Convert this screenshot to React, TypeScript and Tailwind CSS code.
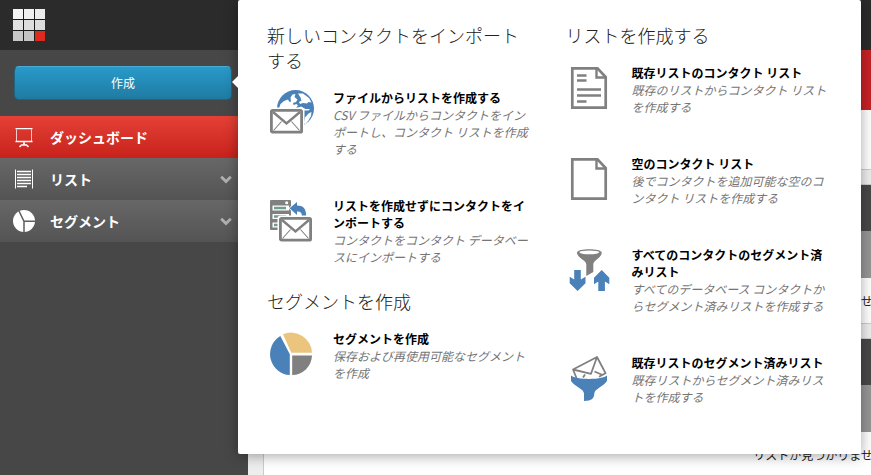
import type { ReactNode } from "react";

const GREY = "#808080";
const BLUE = "#4b81b9";

function Envelope({ x, y }: { x: number; y: number }) {
  return (
    <g transform={`translate(${x} ${y})`}>
      <rect x="-1.5" y="-1.5" width="36" height="27.5" rx="3" fill="#fff" />
      <rect x="1.4" y="1.4" width="30.2" height="21.7" rx="1.2" fill="#fff" stroke={GREY} strokeWidth="2.8" />
      <path d="M3 3 16.5 14.5 30 3" fill="none" stroke={GREY} strokeWidth="2.4" />
      <path d="M3.5 21.5 11.5 12.5M29.5 21.5 21.5 12.5" fill="none" stroke={GREY} strokeWidth="1.1" />
    </g>
  );
}

function Icon({ children }: { children: ReactNode }) {
  return (
    <svg viewBox="0 0 48 48" className="h-12 w-12" aria-hidden="true">
      {children}
    </svg>
  );
}

function GlobeMailIcon() {
  return (
    <Icon>
      <circle cx="28.5" cy="19.5" r="18.5" fill={BLUE} />
      <path
        d="M12 19.5 13.500 15 17 12l4-1.500 1.500 2.500 1.500-.5-.5-4 2-3 3-.5-1 3 3 2.500-1.500 2.500-3 1 .5 2 3-1 1.500 1.500-3 3.500-1.500 5-9 3z"
        fill="#fff"
      />
      <path d="M31 4.500 36 4.500 42 9l2.500 4.500-3-.5-1.500 1.500-4-.5-3 1-1-2 2.500-1.500-1-3z" fill="#fff" />
      <path d="M30.500 19 34 17.500l4.500 2.500 4.500 0-1.500 1.500-4 0-4-1-2.500 1.500z" fill="#fff" />
      <path d="M37 33.500l1-5 3.500-4 3-1.500-.5 4-2.500 4.500-3.500 4z" fill="#fff" />
      <Envelope x={3} y={20} />
    </Icon>
  );
}

function ListMailIcon() {
  return (
    <Icon>
      <rect x="3" y="3" width="21" height="30" rx="1" fill={GREY} />
      <circle cx="19.7" cy="5.8" r="1.5" fill="#fff" />
      <path d="M5.5 8.600h16.500v5H5.500zM5.500 17h16.500v5H5.500zM5.500 25.600h9v5h-9z" fill="#fff" />
      <path d="M7 11h12M7 19.500h12M7 28h5" stroke="#6d9f8c" strokeWidth="2.600" />
      <path d="M21.500 11.300 30.500 3v4.400c6 .2 10.200 3.400 10.200 12.600h-8c0-3.600.2-4.300-2.200-4.500v4.400z" fill="#fff" />
      <path d="M22.600 11.300 30 5v3.400c5.800 0 9.200 2.700 9.200 10.600h-4.400c0-3.800-1.400-4.600-4.800-4.600v3.600z" fill={BLUE} />
      <Envelope x={12} y={20} />
    </Icon>
  );
}

function PieIcon() {
  return (
    <Icon>
      <path d="M22.800 24.200V45A21 21 0 0 1 13.300 6z" fill={BLUE} />
      <path d="M24.300 22.700 16 4.200A21 21 0 0 1 45 22.700z" fill="#ebc47e" />
      <path d="M25.200 25.500H45A20 20 0 0 1 25.200 45z" fill={GREY} />
    </Icon>
  );
}

function PageIcon({ lines = false }: { lines?: boolean }) {
  return (
    <Icon>
      <path d="M6.300 4.300H31.500L39.700 13V43.700H6.300z" fill="#fff" stroke={GREY} strokeWidth="2.700" />
      <path d="M30.500 4V13.500H40" fill="none" stroke={GREY} strokeWidth="2.400" />
      {lines && (
        <path
          d="M11 11.500h9.500M11 16.500h9.500M11 25.500h24M11 31.500h24M11 37.500h9.500"
          stroke={GREY}
          strokeWidth="2.600"
        />
      )}
    </Icon>
  );
}

function FunnelArrowsIcon() {
  return (
    <Icon>
      <path d="M11 6.500C11 2 35.700 2 35.700 6.500 35.700 12 27.300 14 27.300 18.500V26L20.300 30V18.500C20.300 14 11 12 11 6.500z" fill={GREY} />
      <ellipse cx="23.300" cy="6.300" rx="10" ry="1.900" fill="#fff" />
      <path d="M8.200 24h6.600v9.600l4.700-2.800v6.400L11.600 45l-7.900-7.800v-6.400l4.500 2.800z" fill={BLUE} />
      <path d="M32.300 45h6.600v-9.600l4.400 2.800v-6.400L35.700 24 28 31.800v6.400l4.300-2.800z" fill={BLUE} />
    </Icon>
  );
}

function FunnelMailIcon() {
  return (
    <Icon>
      <path
        d="M10.500 24 7 15.500 31 3l8.500 16.200-6.500 3.600M7 15.500l18 4.300L31 3M19 20.500l-2 3M28.500 17.500l7.500 3.300"
        fill="none"
        stroke={GREY}
        strokeWidth="1.800"
        strokeLinejoin="round"
      />
      <path d="M5 21.500C10 26 36 26 41 21.500V27C38 32 28.300 35 28.300 39.500 28.300 44 26 47 18 47V39.500C18 35 8 32 5 27z" fill={BLUE} />
    </Icon>
  );
}

function Option({ icon, title, text }: { icon: ReactNode; title: string; text: string }) {
  return (
    <li>
      <a href="#" className="flex text-xs leading-[17px]">
        <span className="w-[66px] shrink-0">{icon}</span>
        <span className="min-w-0 flex-1">
          <strong className="block font-bold text-black">{title}</strong>
          <em className="block text-[#757575]">{text}</em>
        </span>
      </a>
    </li>
  );
}

function Group({ heading, children }: { heading: string; children: ReactNode }) {
  return (
    <section>
      <h2 className="mb-4 text-lg leading-[25px] font-light text-[#222]">{heading}</h2>
      <ul className="flex flex-col gap-10">{children}</ul>
    </section>
  );
}

function CreateMenu() {
  return (
    <div className="absolute top-0 left-[238px] z-20 grid w-[623px] grid-cols-2 gap-x-8 rounded-[2px] bg-white px-[29px] pt-[23px] pb-[49px] shadow-[0_2px_14px_rgba(0,0,0,0.35)]">
      <span className="absolute top-[76px] -left-[6px] h-0 w-0 border-y-6 border-r-6 border-y-transparent border-r-white" />
      <div className="flex flex-col gap-6">
        <Group heading="新しいコンタクトをインポートする">
          <Option
            icon={<GlobeMailIcon />}
            title="ファイルからリストを作成する"
            text="CSV ファイルからコンタクトをインポートし、コンタクト リストを作成する"
          />
          <Option
            icon={<ListMailIcon />}
            title="リストを作成せずにコンタクトをインポートする"
            text="コンタクトをコンタクト データベースにインポートする"
          />
        </Group>
        <Group heading="セグメントを作成">
          <Option icon={<PieIcon />} title="セグメントを作成" text="保存および再使用可能なセグメントを作成" />
        </Group>
      </div>
      <Group heading="リストを作成する">
        <Option
          icon={<PageIcon lines />}
          title="既存リストのコンタクト リスト"
          text="既存のリストからコンタクト リストを作成する"
        />
        <Option
          icon={<PageIcon />}
          title="空のコンタクト リスト"
          text="後でコンタクトを追加可能な空のコンタクト リストを作成する"
        />
        <Option
          icon={<FunnelArrowsIcon />}
          title="すべてのコンタクトのセグメント済みリスト"
          text="すべてのデータベース コンタクトからセグメント済みリストを作成する"
        />
        <Option
          icon={<FunnelMailIcon />}
          title="既存リストのセグメント済みリスト"
          text="既存リストからセグメント済みリストを作成する"
        />
      </Group>
    </div>
  );
}

function Chevron() {
  return (
    <svg viewBox="0 0 12 9" className="ml-auto h-[9px] w-3" aria-hidden="true">
      <path d="M1.200 1.800 6 6.500l4.800-4.700" fill="none" stroke="#b0b0b0" strokeWidth="2.800" />
    </svg>
  );
}

function EaselIcon() {
  return (
    <svg viewBox="0 0 22 22" className="h-[22px] w-[22px]" fill="none" stroke="#fff" aria-hidden="true">
      <path d="M3.500 3.500v12M18.500 3.500v12" strokeOpacity="0.75" />
      <path d="M2.500 2.700h17M2.500 15.500h17" strokeWidth="1.300" />
      <path d="M11 16v2.500M6.500 21l2-2h5l2 2" strokeWidth="1.600" />
    </svg>
  );
}

function ListIcon() {
  return (
    <svg viewBox="0 0 22 22" className="h-[22px] w-[22px]" fill="none" stroke="#fff" aria-hidden="true">
      <path d="M2.500 1.500v19M19.500 1.500v19" />
      <path d="M4 3.500h14M4 6.500h14M4 9.500h14M4 12.500h14M4 15.500h14M4 18.500h10" strokeWidth="1.500" />
    </svg>
  );
}

function SegmentIcon() {
  return (
    <svg viewBox="0 0 22 22" className="h-[22px] w-[22px]" aria-hidden="true">
      <circle cx="11" cy="11" r="11" fill="#fff" />
      <path d="M5.500 0 11 11.300V22M11 11.300H22" fill="none" stroke="#5f5f5f" strokeWidth="1.500" />
    </svg>
  );
}

function NavItem({
  icon,
  label,
  active = false,
}: {
  icon: ReactNode;
  label: string;
  active?: boolean;
}) {
  return (
    <li>
      <a
        href="#"
        className={
          active
            ? "flex h-[42px] items-center gap-[15px] bg-linear-to-b from-[#e44036] to-[#c8211b] pr-4 pl-[13px] text-sm font-bold text-white"
            : "flex h-[42px] items-center gap-[15px] bg-linear-to-b from-[#676767] to-[#545454] pr-4 pl-[13px] text-sm font-bold text-white"
        }
      >
        {icon}
        {label}
        {!active && <Chevron />}
      </a>
    </li>
  );
}

const logoCells = [
  "bg-[#f4f4f4]",
  "bg-[#f0f0f0]",
  "bg-[#ececec]",
  "bg-[#e2e2e2]",
  "bg-[#dedede]",
  "bg-[#dcdcdc]",
  "bg-[#c8c8c8]",
  "bg-[#c4c4c4]",
  "bg-[#dd2a1f]",
];

function EmptyCard() {
  return (
    <section className="border border-[#ccc] bg-white text-center text-xs text-[#222]">
      <div className="h-[46px] bg-[#484848]" />
      <div className="h-[47px] bg-[#969696]" />
      <p className="flex h-[45px] items-center justify-center">リストが見つかりません。</p>
    </section>
  );
}

export default function App() {
  return (
    <div
      lang="ja"
      className="relative flex h-screen flex-col overflow-hidden bg-[#eee] font-['Noto_Sans_CJK_JP',sans-serif]"
    >
      <header className="flex h-[50px] shrink-0 items-start bg-[#2b2b2b] px-[13px] pt-[9px]">
        <a href="#" aria-label="ホーム" className="grid grid-cols-3 gap-px bg-[#1a1a1a]">
          {logoCells.map((cell) => (
            <span key={cell} className={`h-[10px] w-[10px] ${cell}`} />
          ))}
        </a>
      </header>
      <div className="flex min-h-0 flex-1">
        <aside className="w-[248px] shrink-0 bg-[#474747]">
          <div className="p-4 pl-[14px]">
            <button
              type="button"
              className="block h-[34px] w-full rounded-[5px] border border-[#1f6480] border-t-[#49abd6] bg-linear-to-b from-[#289aca] to-[#207ba3] text-xs text-white"
            >
              作成
            </button>
          </div>
          <nav>
            <ul>
              <NavItem icon={<EaselIcon />} label="ダッシュボード" active />
              <NavItem icon={<ListIcon />} label="リスト" />
              <NavItem icon={<SegmentIcon />} label="セグメント" />
            </ul>
          </nav>
        </aside>
        <main className="min-w-[1154px] flex-1">
          <div className="h-[60px] bg-[#c82127]" />
          <div className="h-[59px] border-x-[15px] border-[#eee] bg-white" />
          <div className="flex flex-col gap-[14px] px-[15px]">
            <div className="border-t border-[#ccc]" />
            <EmptyCard />
            <EmptyCard />
          </div>
        </main>
      </div>
      <CreateMenu />
    </div>
  );
}
